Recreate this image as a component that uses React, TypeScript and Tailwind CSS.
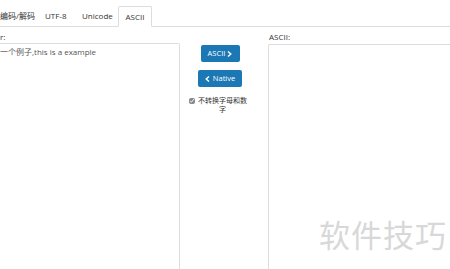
import React from 'react';

const tabs = [
  { label: '编码/解码', w: 'w-[45px]' },
  { label: 'UTF-8', w: 'w-[37px]' },
  { label: 'Unicode', w: 'w-[36px]' },
];

export default function App() {
  return (
    <div
      className="relative w-[450px] h-[269px] overflow-hidden bg-white text-[#333]"
      style={{ fontFamily: '"Open Sans", "Noto Sans CJK SC", sans-serif' }}
    >
      {/* Tabs */}
      <div className="flex h-[27px] items-end border-b border-[#ddd]">
        {tabs.map(t => (
          <div key={t.label} className={`${t.w} h-[21px] flex items-center text-[8px] whitespace-nowrap`}>
            {t.label}
          </div>
        ))}
        <div className="h-[21px] w-[34px] flex items-center justify-center text-[8px] bg-white border border-[#ddd] border-b-white -mb-px rounded-t-[2px]">
          ASCII
        </div>
      </div>

      <div className="flex">
        {/* Left */}
        <div className="w-[180px] shrink-0">
          <div className="h-[16px] flex items-center text-[8px] pt-[3px]">r:</div>
          <div className="h-[240px] border border-[#ddd] border-l-0 rounded-tr-[2px] pt-[2px] text-[8px] text-[#555]">
            一个例子,this is a example
          </div>
        </div>

        {/* Middle */}
        <div className="w-[88px] shrink-0 flex flex-col items-center pt-[18px] pr-[8px]">
          <button className="h-[17px] w-[39px] flex items-center justify-center gap-[2px] bg-[#1c78b5] text-white text-[7.5px] rounded-[2px]">
            ASCII
            <svg width="5" height="6" viewBox="0 0 5 6">
              <path d="M1 0.5 L3.8 3 L1 5.5" stroke="white" strokeWidth="1.4" fill="none" />
            </svg>
          </button>
          <button className="mt-[8px] h-[17px] w-[44px] flex items-center justify-center gap-[3px] bg-[#1c78b5] text-white text-[7.5px] rounded-[2px]">
            <svg width="5" height="6" viewBox="0 0 5 6">
              <path d="M4 0.5 L1.2 3 L4 5.5" stroke="white" strokeWidth="1.4" fill="none" />
            </svg>
            Native
          </button>
          <div className="mt-[9px] flex items-start gap-[3px] -ml-[4px]">
            <input type="checkbox" defaultChecked className="w-[6px] h-[6px] mt-[2px] accent-[#888]" />
            <span className="w-[50px] text-[7px] leading-[9px] text-center">不转换字母和数字</span>
          </div>
        </div>

        {/* Right */}
        <div className="flex-1">
          <div className="h-[17px] flex items-center text-[8px] pt-[3px] pl-[1px]">ASCII:</div>
          <div className="h-[240px] border border-[#ddd] border-r-0 rounded-tl-[2px]" />
        </div>
      </div>

      {/* watermark */}
      <div
        className="absolute left-[319px] top-[211px] text-[31px] tracking-[1px] text-[#d8d8d8]"
        style={{ fontFamily: '"Noto Sans CJK SC", sans-serif' }}
      >
        软件技巧
      </div>
    </div>
  );
}
